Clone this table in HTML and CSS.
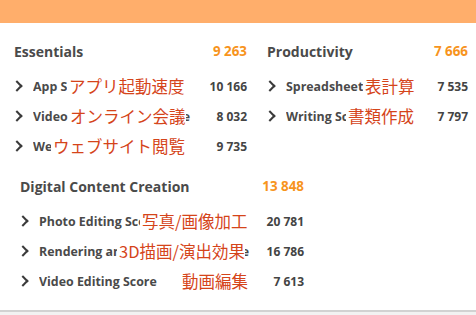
FILE: index.html
```html
<!DOCTYPE html>
<html lang="ja">
<head>
<meta charset="utf-8">
<link rel="stylesheet" href="styles.css">
</head>
<body>
<div class="topbar"></div>
<main class="panel">
  <div class="grid">
    <section class="section">
      <div class="head"><span class="title">Essentials</span><span class="total">9 263</span></div>
      <div class="row"><span class="chev"></span><span class="label">App Startup Score</span><span class="val">10 166</span><span class="jp jp-e1">アプリ起動速度</span></div>
      <div class="row"><span class="chev"></span><span class="label">Video Conferencing Score</span><span class="val">8 032</span><span class="jp jp-e2">オンライン会議</span></div>
      <div class="row"><span class="chev"></span><span class="label">Web Browsing Score</span><span class="val">9 735</span><span class="jp jp-e3">ウェブサイト閲覧</span></div>
    </section>
    <section class="section">
      <div class="head"><span class="title">Productivity</span><span class="total">7 666</span></div>
      <div class="row"><span class="chev"></span><span class="label">Spreadsheets Score</span><span class="val">7 535</span><span class="jp jp-p1">表計算</span></div>
      <div class="row"><span class="chev"></span><span class="label">Writing Score</span><span class="val">7 797</span><span class="jp jp-p2">書類作成</span></div>
    </section>
  </div>
  <section class="section dcc">
    <div class="head"><span class="title">Digital Content Creation</span><span class="total">13 848</span></div>
    <div class="row"><span class="chev"></span><span class="label">Photo Editing Score</span><span class="val">20 781</span><span class="jp jp-d1">写真/画像加工</span></div>
    <div class="row"><span class="chev"></span><span class="label">Rendering and Visualization Score</span><span class="val">16 786</span><span class="jp jp-d2">3D描画/演出効果</span></div>
    <div class="row"><span class="chev"></span><span class="label">Video Editing Score</span><span class="val">7 613</span><span class="jp jp-d3">動画編集</span></div>
  </section>
</main>
<div class="footer"></div>
</body>
</html>
```
FILE: styles.css
```css
html, body {
  margin: 0;
  padding: 0;
  background: #ffffff;
  width: 476px;
  height: 315px;
  overflow: hidden;
  font-family: "Open Sans", "Liberation Sans", sans-serif;
}
.topbar {
  height: 23px;
  background: #ffae6b;
}
.panel {
  height: 289px;
  padding: 18px 0 0 0;
  box-sizing: border-box;
  border-bottom: 2px solid #d2d2d2;
}
.grid {
  display: grid;
  grid-template-columns: 233px 201px;
  column-gap: 20px;
  padding-left: 14px;
}
.section {
  display: flex;
  flex-direction: column;
}
.head {
  display: flex;
  justify-content: space-between;
  align-items: center;
  height: 20px;
  margin-bottom: 10px;
  font-weight: 700;
}
.title {
  color: #4a4a4a;
  font-size: 14px;
}
.total {
  color: #f7941d;
  font-size: 13.4px;
}
.row {
  position: relative;
  display: flex;
  align-items: center;
  height: 30px;
  font-size: 12.4px;
  font-weight: 700;
  color: #4a4a4a;
}
.chev {
  width: 6px;
  height: 6px;
  border-top: 2px solid #3a3a3a;
  border-right: 2px solid #3a3a3a;
  transform: rotate(45deg);
  margin: 0 12px 0 -1px;
  flex: none;
}
.label {
  flex: 1;
  white-space: nowrap;
  overflow: hidden;
}
.val {
  flex: none;
  margin-left: 8px;
  color: #444;
  font-size: 12px;
}
.jp {
  position: absolute;
  top: 50%;
  transform: translateY(-50%);
  font-family: "Noto Sans CJK JP", sans-serif;
  font-weight: 400;
  font-size: 16.5px;
  line-height: 20px;
  color: #d5441a;
  background: #ffffff;
  padding-left: 2px;
  white-space: nowrap;
}
.jp-e1 { left: 53px; }
.jp-e2 { left: 54px; }
.jp-e3 { left: 37px; }
.jp-p1 { left: 96px; }
.jp-p2 { left: 79px; }
.dcc {
  width: 284px;
  margin: 15px 0 0 20px;
}
.jp-d1 { left: 120px; }
.jp-d2 { left: 97px; }
.jp-d3 { left: 160px; }
.footer {
  height: 3px;
  background: #f2f2f2;
}
```
